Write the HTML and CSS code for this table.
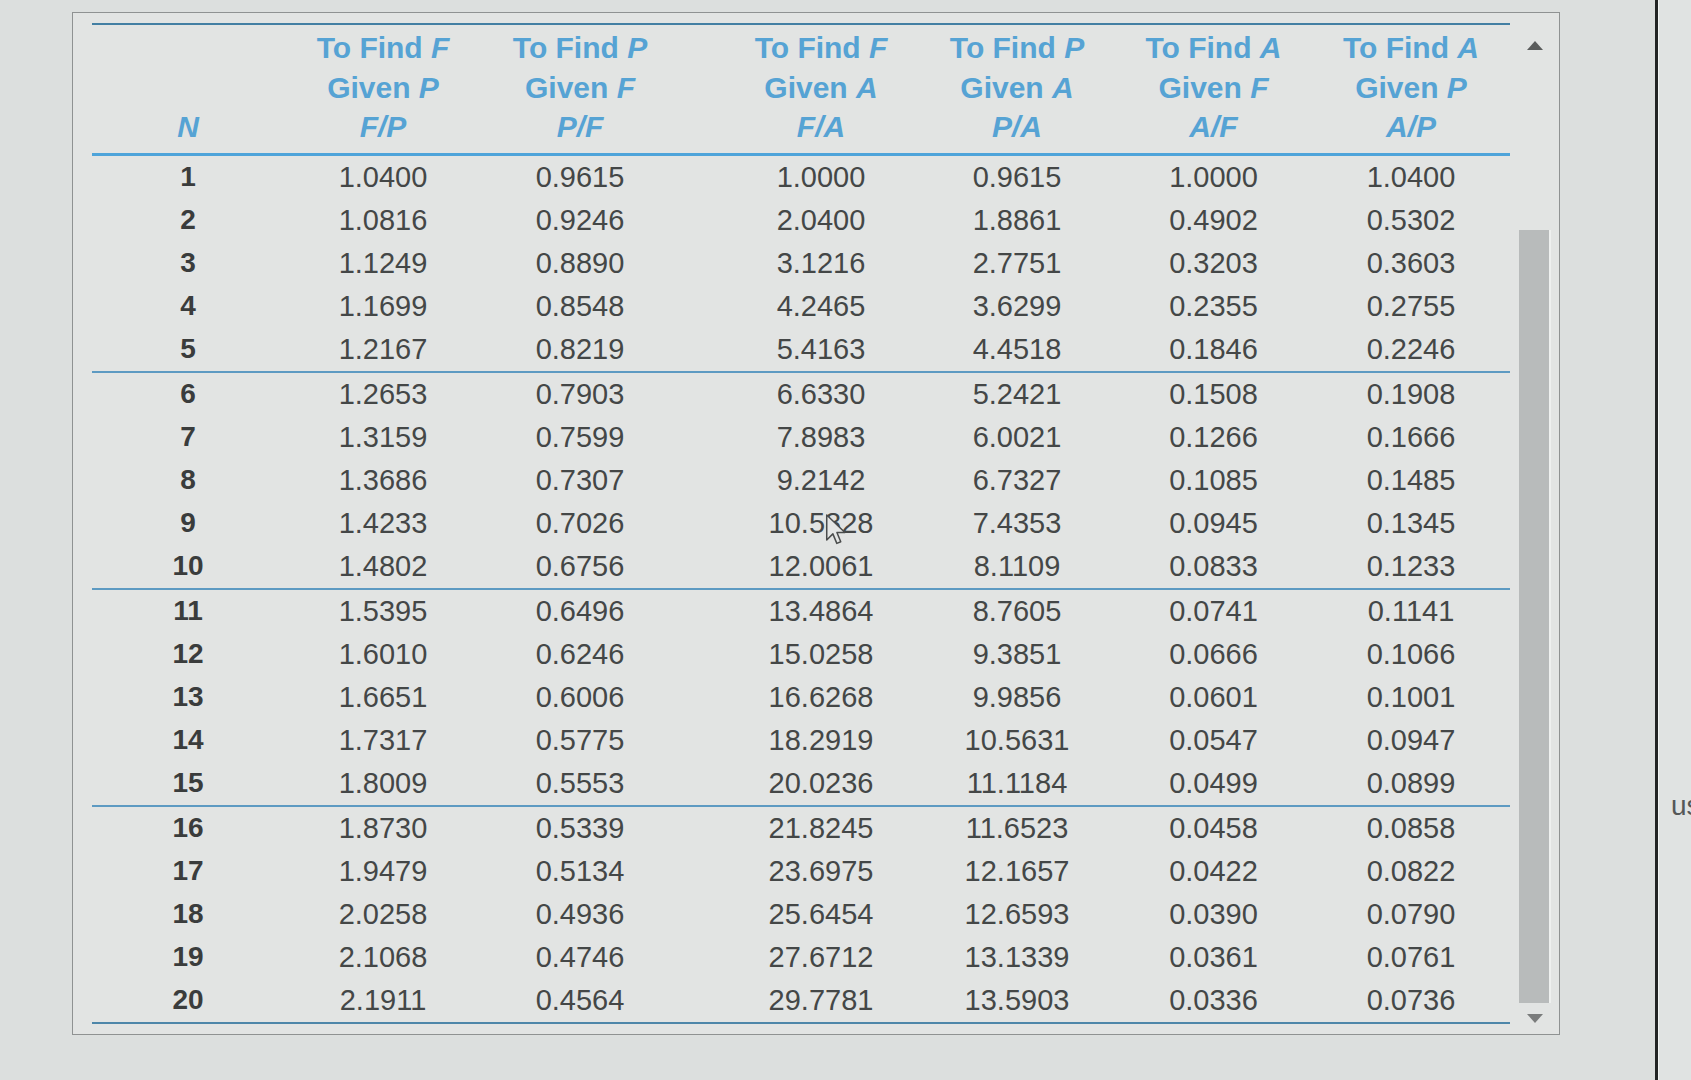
FILE: index.html
```html
<!DOCTYPE html>
<html lang="en">
<head>
<meta charset="utf-8">
<title>Interest factors table</title>
<link rel="stylesheet" href="styles.css">
</head>
<body>
<div class="screen">
  <div class="panel">
    <div class="tbl">
      <div class="row head">
        <div class="hc n"><i>N</i></div>
        <div class="hc"><span>To Find <i>F</i></span><span>Given <i>P</i></span><span><i>F/P</i></span></div>
        <div class="hc"><span>To Find <i>P</i></span><span>Given <i>F</i></span><span><i>P/F</i></span></div>
        <div class="hc gs"><span>To Find <i>F</i></span><span>Given <i>A</i></span><span><i>F/A</i></span></div>
        <div class="hc"><span>To Find <i>P</i></span><span>Given <i>A</i></span><span><i>P/A</i></span></div>
        <div class="hc"><span>To Find <i>A</i></span><span>Given <i>F</i></span><span><i>A/F</i></span></div>
        <div class="hc"><span>To Find <i>A</i></span><span>Given <i>P</i></span><span><i>A/P</i></span></div>
      </div>
      <div class="group">
        <div class="row"><div class="c n">1</div><div class="c">1.0400</div><div class="c">0.9615</div><div class="c gs">1.0000</div><div class="c">0.9615</div><div class="c">1.0000</div><div class="c">1.0400</div></div>
        <div class="row"><div class="c n">2</div><div class="c">1.0816</div><div class="c">0.9246</div><div class="c gs">2.0400</div><div class="c">1.8861</div><div class="c">0.4902</div><div class="c">0.5302</div></div>
        <div class="row"><div class="c n">3</div><div class="c">1.1249</div><div class="c">0.8890</div><div class="c gs">3.1216</div><div class="c">2.7751</div><div class="c">0.3203</div><div class="c">0.3603</div></div>
        <div class="row"><div class="c n">4</div><div class="c">1.1699</div><div class="c">0.8548</div><div class="c gs">4.2465</div><div class="c">3.6299</div><div class="c">0.2355</div><div class="c">0.2755</div></div>
        <div class="row"><div class="c n">5</div><div class="c">1.2167</div><div class="c">0.8219</div><div class="c gs">5.4163</div><div class="c">4.4518</div><div class="c">0.1846</div><div class="c">0.2246</div></div>
      </div>
      <div class="group">
        <div class="row"><div class="c n">6</div><div class="c">1.2653</div><div class="c">0.7903</div><div class="c gs">6.6330</div><div class="c">5.2421</div><div class="c">0.1508</div><div class="c">0.1908</div></div>
        <div class="row"><div class="c n">7</div><div class="c">1.3159</div><div class="c">0.7599</div><div class="c gs">7.8983</div><div class="c">6.0021</div><div class="c">0.1266</div><div class="c">0.1666</div></div>
        <div class="row"><div class="c n">8</div><div class="c">1.3686</div><div class="c">0.7307</div><div class="c gs">9.2142</div><div class="c">6.7327</div><div class="c">0.1085</div><div class="c">0.1485</div></div>
        <div class="row"><div class="c n">9</div><div class="c">1.4233</div><div class="c">0.7026</div><div class="c gs has-cursor">10.5828<svg class="cursor" width="22" height="33" viewBox="0 0 19 28"><path d="M1.5 1.5 L1.5 23 L6.8 17.8 L10.2 26 L13.6 24.6 L10.3 16.6 L17.2 16.6 Z" fill="#e4e6e5" stroke="#4a4c4c" stroke-width="1.3" stroke-linejoin="round"/></svg></div><div class="c">7.4353</div><div class="c">0.0945</div><div class="c">0.1345</div></div>
        <div class="row"><div class="c n">10</div><div class="c">1.4802</div><div class="c">0.6756</div><div class="c gs">12.0061</div><div class="c">8.1109</div><div class="c">0.0833</div><div class="c">0.1233</div></div>
      </div>
      <div class="group">
        <div class="row"><div class="c n">11</div><div class="c">1.5395</div><div class="c">0.6496</div><div class="c gs">13.4864</div><div class="c">8.7605</div><div class="c">0.0741</div><div class="c">0.1141</div></div>
        <div class="row"><div class="c n">12</div><div class="c">1.6010</div><div class="c">0.6246</div><div class="c gs">15.0258</div><div class="c">9.3851</div><div class="c">0.0666</div><div class="c">0.1066</div></div>
        <div class="row"><div class="c n">13</div><div class="c">1.6651</div><div class="c">0.6006</div><div class="c gs">16.6268</div><div class="c">9.9856</div><div class="c">0.0601</div><div class="c">0.1001</div></div>
        <div class="row"><div class="c n">14</div><div class="c">1.7317</div><div class="c">0.5775</div><div class="c gs">18.2919</div><div class="c">10.5631</div><div class="c">0.0547</div><div class="c">0.0947</div></div>
        <div class="row"><div class="c n">15</div><div class="c">1.8009</div><div class="c">0.5553</div><div class="c gs">20.0236</div><div class="c">11.1184</div><div class="c">0.0499</div><div class="c">0.0899</div></div>
      </div>
      <div class="group last">
        <div class="row"><div class="c n">16</div><div class="c">1.8730</div><div class="c">0.5339</div><div class="c gs">21.8245</div><div class="c">11.6523</div><div class="c">0.0458</div><div class="c">0.0858</div></div>
        <div class="row"><div class="c n">17</div><div class="c">1.9479</div><div class="c">0.5134</div><div class="c gs">23.6975</div><div class="c">12.1657</div><div class="c">0.0422</div><div class="c">0.0822</div></div>
        <div class="row"><div class="c n">18</div><div class="c">2.0258</div><div class="c">0.4936</div><div class="c gs">25.6454</div><div class="c">12.6593</div><div class="c">0.0390</div><div class="c">0.0790</div></div>
        <div class="row"><div class="c n">19</div><div class="c">2.1068</div><div class="c">0.4746</div><div class="c gs">27.6712</div><div class="c">13.1339</div><div class="c">0.0361</div><div class="c">0.0761</div></div>
        <div class="row"><div class="c n">20</div><div class="c">2.1911</div><div class="c">0.4564</div><div class="c gs">29.7781</div><div class="c">13.5903</div><div class="c">0.0336</div><div class="c">0.0736</div></div>
      </div>
    </div>
    <div class="scroll">
      <div class="arrow up"></div>
      <div class="thumb"></div>
      <div class="arrow down"></div>
    </div>
  </div>
  <div class="divider"></div>
  <div class="side">us</div>
</div>
</body>
</html>
```

FILE: styles.css
```css
* { box-sizing: border-box; }

html, body {
  margin: 0;
  padding: 0;
}

body {
  width: 1691px;
  height: 1080px;
  overflow: hidden;
  background: #dcdfde;
  font-family: "Liberation Sans", Arial, sans-serif;
}

.screen {
  display: flex;
  height: 1080px;
}

.panel {
  margin: 12px 0 0 72px;
  width: 1488px;
  height: 1023px;
  border: 1px solid #8f9292;
  background: #e2e4e3;
  display: flex;
  flex: none;
}

.tbl {
  margin: 10px 0 0 19px;
  width: 1418px;
  flex: none;
}

.row {
  display: grid;
  grid-template-columns: 192px 198px 196px 241px 196px 197px 198px;
}

.head {
  border-top: 2px solid #437fa3;
  border-bottom: 3px solid #4ea4da;
  padding: 3px 0 6px;
}

.hc {
  display: flex;
  flex-direction: column;
  align-items: center;
  color: #56a3d4;
  font-weight: bold;
  font-size: 30px;
  line-height: 39.5px;
  white-space: nowrap;
}

.hc i {
  font-style: italic;
}

.hc.n {
  justify-content: flex-end;
}

.gs {
  padding-left: 45px;
}

.group {
  border-bottom: 2px solid #5d9ac2;
}

.group.last {
  border-bottom-color: #4d86a9;
}

.c {
  height: 43px;
  display: flex;
  align-items: center;
  justify-content: center;
  font-size: 29px;
  color: #444747;
  white-space: nowrap;
}

.c.n {
  font-weight: bold;
  font-size: 28px;
  color: #3a3c3c;
}

.has-cursor {
  position: relative;
}

.cursor {
  position: absolute;
  left: 147px;
  top: 11px;
}

.scroll {
  flex: 1;
  display: flex;
  flex-direction: column;
  align-items: center;
  padding-top: 28px;
}

.arrow {
  width: 0;
  height: 0;
  border-left: 8px solid transparent;
  border-right: 8px solid transparent;
}

.arrow.up {
  border-bottom: 9px solid #5a5c5c;
}

.arrow.down {
  margin-top: 11px;
  border-top: 9px solid #7a7c7c;
}

.thumb {
  margin-top: 180px;
  width: 32px;
  height: 773px;
  background: #b8bbbb;
  border-right: 2px solid #eef0ef;
}

.divider {
  flex: none;
  margin-left: 95px;
  width: 4px;
  background: #232525;
  border-right: 1px solid #f3f5f4;
}

.side {
  flex: 1;
  background: #e0e3e2;
  padding: 790px 0 0 12px;
  font-size: 28px;
  line-height: 32px;
  color: #555858;
  white-space: nowrap;
  overflow: hidden;
}
```
